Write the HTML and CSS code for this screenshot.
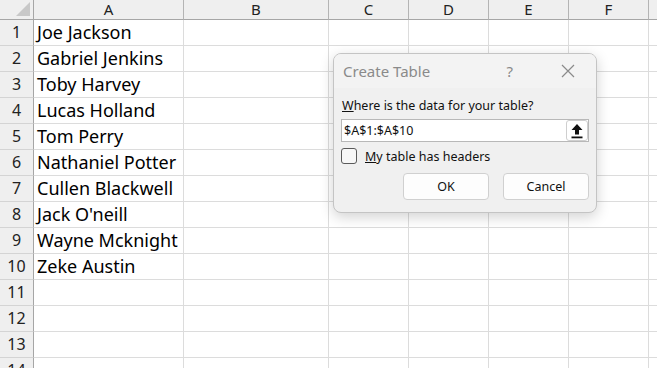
FILE: index.html
```html
<!DOCTYPE html>
<html lang="en">
<head>
  <meta charset="UTF-8">
  <title>Create Table</title>
  <link rel="stylesheet" href="styles.css">
</head>
<body>
  <div class="sheet">
    <div class="corner"><span class="corner-tri"></span></div>
    <div class="col-head">A</div>
    <div class="col-head">B</div>
    <div class="col-head">C</div>
    <div class="col-head">D</div>
    <div class="col-head">E</div>
    <div class="col-head">F</div>
    <div class="col-head"></div>

    <div class="row-head">1</div><div class="cell">Joe Jackson</div><div class="cell"></div><div class="cell"></div><div class="cell"></div><div class="cell"></div><div class="cell"></div><div class="cell"></div>
    <div class="row-head">2</div><div class="cell">Gabriel Jenkins</div><div class="cell"></div><div class="cell"></div><div class="cell"></div><div class="cell"></div><div class="cell"></div><div class="cell"></div>
    <div class="row-head">3</div><div class="cell">Toby Harvey</div><div class="cell"></div><div class="cell"></div><div class="cell"></div><div class="cell"></div><div class="cell"></div><div class="cell"></div>
    <div class="row-head">4</div><div class="cell">Lucas Holland</div><div class="cell"></div><div class="cell"></div><div class="cell"></div><div class="cell"></div><div class="cell"></div><div class="cell"></div>
    <div class="row-head">5</div><div class="cell">Tom Perry</div><div class="cell"></div><div class="cell"></div><div class="cell"></div><div class="cell"></div><div class="cell"></div><div class="cell"></div>
    <div class="row-head">6</div><div class="cell">Nathaniel Potter</div><div class="cell"></div><div class="cell"></div><div class="cell"></div><div class="cell"></div><div class="cell"></div><div class="cell"></div>
    <div class="row-head">7</div><div class="cell">Cullen Blackwell</div><div class="cell"></div><div class="cell"></div><div class="cell"></div><div class="cell"></div><div class="cell"></div><div class="cell"></div>
    <div class="row-head">8</div><div class="cell">Jack O'neill</div><div class="cell"></div><div class="cell"></div><div class="cell"></div><div class="cell"></div><div class="cell"></div><div class="cell"></div>
    <div class="row-head">9</div><div class="cell">Wayne Mcknight</div><div class="cell"></div><div class="cell"></div><div class="cell"></div><div class="cell"></div><div class="cell"></div><div class="cell"></div>
    <div class="row-head">10</div><div class="cell">Zeke Austin</div><div class="cell"></div><div class="cell"></div><div class="cell"></div><div class="cell"></div><div class="cell"></div><div class="cell"></div>
    <div class="row-head">11</div><div class="cell"></div><div class="cell"></div><div class="cell"></div><div class="cell"></div><div class="cell"></div><div class="cell"></div><div class="cell"></div>
    <div class="row-head">12</div><div class="cell"></div><div class="cell"></div><div class="cell"></div><div class="cell"></div><div class="cell"></div><div class="cell"></div><div class="cell"></div>
    <div class="row-head">13</div><div class="cell"></div><div class="cell"></div><div class="cell"></div><div class="cell"></div><div class="cell"></div><div class="cell"></div><div class="cell"></div>
    <div class="row-head">14</div><div class="cell"></div><div class="cell"></div><div class="cell"></div><div class="cell"></div><div class="cell"></div><div class="cell"></div><div class="cell"></div>
  </div>

  <!-- Create Table dialog floating over the sheet -->
  <div class="dialog">
    <div class="dialog-title">
      <span class="title-text">Create Table</span>
      <span class="title-help">?</span>
      <svg class="title-close" width="14" height="14" viewBox="0 0 14 14">
        <path d="M1 1 L13 13 M13 1 L1 13" stroke="#8a8a8a" stroke-width="1.2" fill="none"/>
      </svg>
    </div>
    <div class="dialog-body">
      <div class="prompt"><u>W</u>here is the data for your table?</div>
      <div class="range-box">
        <span class="range-text">$A$1:$A$10</span>
        <span class="range-btn">
          <svg width="12" height="16" viewBox="0 0 12 16">
            <path d="M6 1 L11.5 7 L8 7 L8 11.5 L4 11.5 L4 7 L0.5 7 Z" fill="#111"/>
            <rect x="0.5" y="13.5" width="11" height="1.8" fill="#111"/>
          </svg>
        </span>
      </div>
      <label class="check-row">
        <span class="checkbox"></span>
        <span><u>M</u>y table has headers</span>
      </label>
      <div class="actions">
        <button class="btn">OK</button>
        <button class="btn">Cancel</button>
      </div>
    </div>
  </div>
</body>
</html>
```

FILE: styles.css
```css
body {
  margin: 0;
  background-color: #fff;
  font-family: "Segoe UI", "Noto Sans", "Open Sans", sans-serif;
  overflow: hidden;
}
.sheet {
  display: grid;
  grid-template-columns: 34px 150px 145px 80px 80px 80px 80px 80px;
  grid-template-rows: 20px repeat(14, 26px);
}
.corner,
.col-head,
.row-head {
  background-color: #efefef;
  color: #222;
  box-sizing: border-box;
}
.corner {
  border-right: 1px solid #a6a6a6;
  border-bottom: 1px solid #a6a6a6;
  position: relative;
}
.corner-tri {
  position: absolute;
  right: 3px;
  bottom: 3px;
  width: 0;
  height: 0;
  border-left: 14px solid transparent;
  border-bottom: 14px solid #c8c8c8;
}
.col-head {
  border-right: 1px solid #b4b4b4;
  border-bottom: 1px solid #a6a6a6;
  text-align: center;
  font-size: 15px;
  line-height: 19px;
}
.row-head {
  border-right: 1px solid #a6a6a6;
  border-bottom: 1px solid #d4d4d4;
  text-align: center;
  font-size: 16px;
  line-height: 25px;
}
.cell {
  border-right: 1px solid #dcdcdc;
  border-bottom: 1px solid #dcdcdc;
  box-sizing: border-box;
  padding-left: 3px;
  font-size: 18px;
  line-height: 25px;
  color: #000;
  white-space: nowrap;
}

.dialog {
  position: absolute;
  left: 333px;
  top: 53px;
  width: 264px;
  height: 160px;
  box-sizing: border-box;
  background-color: #f0f0f0;
  border: 1px solid #c4c4c4;
  border-radius: 8px;
  box-shadow: 0 4px 14px rgba(0, 0, 0, 0.18);
  overflow: hidden;
  font-size: 12.5px;
  color: #111;
}
.dialog-title {
  height: 34px;
  background-color: #f3f3f3;
  display: flex;
  align-items: center;
  padding-left: 9px;
}
.title-text {
  font-size: 15px;
  color: #8a8a8a;
  flex: 1;
}
.title-help {
  font-size: 15px;
  color: #8a8a8a;
  margin-right: 48px;
}
.title-close {
  margin-right: 21px;
}
.dialog-body {
  padding: 9px 7px 0 7px;
}
.prompt {
  line-height: 18px;
  padding-left: 1px;
}
.range-box {
  margin-top: 4px;
  height: 23px;
  box-sizing: border-box;
  background-color: #fff;
  border: 1px solid #b8b8b8;
  display: flex;
  align-items: center;
  justify-content: space-between;
  padding-left: 2px;
}
.range-text {
  font-size: 12.5px;
}
.range-btn {
  width: 22px;
  height: 21px;
  box-sizing: border-box;
  border: 1px solid #cfcfcf;
  border-radius: 3px;
  background-color: #fff;
  display: flex;
  align-items: center;
  justify-content: center;
}
.check-row {
  display: flex;
  align-items: center;
  gap: 8px;
  margin-top: 6px;
  height: 16px;
}
.checkbox {
  width: 16px;
  height: 16px;
  box-sizing: border-box;
  border: 1px solid #5a5a5a;
  border-radius: 3px;
  background-color: #f7f7f7;
}
.actions {
  display: flex;
  justify-content: flex-end;
  gap: 14px;
  margin-top: 9px;
}
.btn {
  width: 86px;
  height: 27px;
  box-sizing: border-box;
  background-color: #fdfdfd;
  border: 1px solid #d0d0d0;
  border-radius: 4px;
  font-family: inherit;
  font-size: 12.5px;
  color: #111;
}
```
